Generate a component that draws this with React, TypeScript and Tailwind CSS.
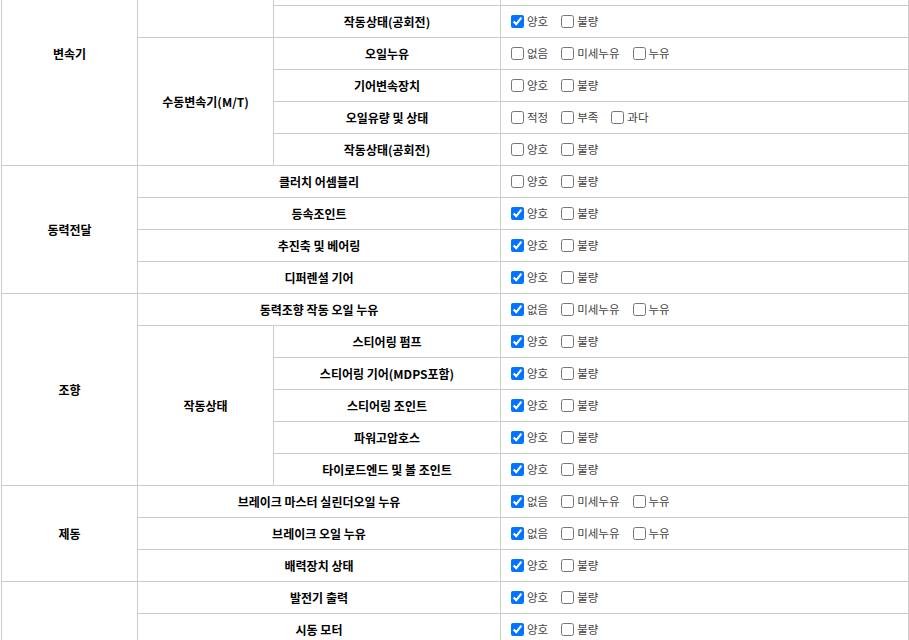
import React from "react";

type Opt = { label: string; checked?: boolean };

type Row = {
    group?: { label: string; span: number };
    sub?: { label: string; span: number };
    item: string;
    wide?: boolean;
    options: Opt[];
};

const good = (checked = true): Opt[] => [
    { label: "양호", checked },
    { label: "불량" },
];
const leak = (checked = true): Opt[] => [
    { label: "없음", checked },
    { label: "미세누유" },
    { label: "누유" },
];
const level = (): Opt[] => [
    { label: "적정" },
    { label: "부족" },
    { label: "과다" },
];

// list is scrolled: the first two rows sit above the top edge
const rows: Row[] = [
    {
        group: { label: "변속기", span: 7 },
        sub: { label: "자동변속기(A/T)", span: 3 },
        item: "오일누유",
        options: leak(),
    },
    { item: "오일유량 및 상태", options: level() },
    { item: "작동상태(공회전)", options: good() },
    {
        sub: { label: "수동변속기(M/T)", span: 4 },
        item: "오일누유",
        options: leak(false),
    },
    { item: "기어변속장치", options: good(false) },
    { item: "오일유량 및 상태", options: level() },
    { item: "작동상태(공회전)", options: good(false) },
    {
        group: { label: "동력전달", span: 4 },
        item: "클러치 어셈블리",
        wide: true,
        options: good(false),
    },
    { item: "등속조인트", wide: true, options: good() },
    { item: "추진축 및 베어링", wide: true, options: good() },
    { item: "디퍼렌셜 기어", wide: true, options: good() },
    {
        group: { label: "조향", span: 6 },
        item: "동력조향 작동 오일 누유",
        wide: true,
        options: leak(),
    },
    {
        sub: { label: "작동상태", span: 5 },
        item: "스티어링 펌프",
        options: good(),
    },
    { item: "스티어링 기어(MDPS포함)", options: good() },
    { item: "스티어링 조인트", options: good() },
    { item: "파워고압호스", options: good() },
    { item: "타이로드엔드 및 볼 조인트", options: good() },
    {
        group: { label: "제동", span: 3 },
        item: "브레이크 마스터 실린더오일 누유",
        wide: true,
        options: leak(),
    },
    { item: "브레이크 오일 누유", wide: true, options: leak() },
    { item: "배력장치 상태", wide: true, options: good() },
    {
        group: { label: "전기", span: 6 },
        item: "발전기 출력",
        wide: true,
        options: good(),
    },
    { item: "시동 모터", wide: true, options: good() },
    { item: "와이퍼 모터 기능", wide: true, options: good() },
    { item: "실내송풍 모터", wide: true, options: good() },
    { item: "라디에이터 팬 모터", wide: true, options: good() },
    { item: "윈도우 모터", wide: true, options: good() },
];

const th =
    "border border-[#cccccc] h-[32px] p-0 text-center align-middle text-[12px] font-bold text-black";

function Options({ opts }: { opts: Opt[] }) {
    return (
        <div className="flex items-center pl-[10px]">
            {opts.map((o) => (
                <label key={o.label} className="mr-[13px] flex items-center">
                    <input
                        type="checkbox"
                        defaultChecked={o.checked}
                        className="m-0 h-[13px] w-[13px]"
                    />
                    <span className="ml-[3px] text-[11.5px] text-[#444]">{o.label}</span>
                </label>
            ))}
        </div>
    );
}

export default function App() {
    return (
        <div
            className="h-[640px] overflow-hidden bg-white"
            style={{ fontFamily: '"Noto Sans CJK KR", "Noto Sans", sans-serif' }}
        >
            <table className="-mt-[59px] ml-[1px] w-[907px] table-fixed border-collapse">
                <colgroup>
                    <col className="w-[136px]" />
                    <col className="w-[136px]" />
                    <col className="w-[227px]" />
                    <col className="w-[408px]" />
                </colgroup>
                <tbody>
                    {rows.map((r, i) => (
                        <tr key={i}>
                            {r.group && (
                                <td rowSpan={r.group.span} className={th}>
                                    {r.group.label}
                                </td>
                            )}
                            {r.sub && (
                                <td rowSpan={r.sub.span} className={th}>
                                    {r.sub.label}
                                </td>
                            )}
                            <td colSpan={r.wide ? 2 : 1} className={th}>
                                {r.item}
                            </td>
                            <td className="border border-[#cccccc] h-[32px] p-0 align-middle">
                                <Options opts={r.options} />
                            </td>
                        </tr>
                    ))}
                </tbody>
            </table>
        </div>
    );
}
